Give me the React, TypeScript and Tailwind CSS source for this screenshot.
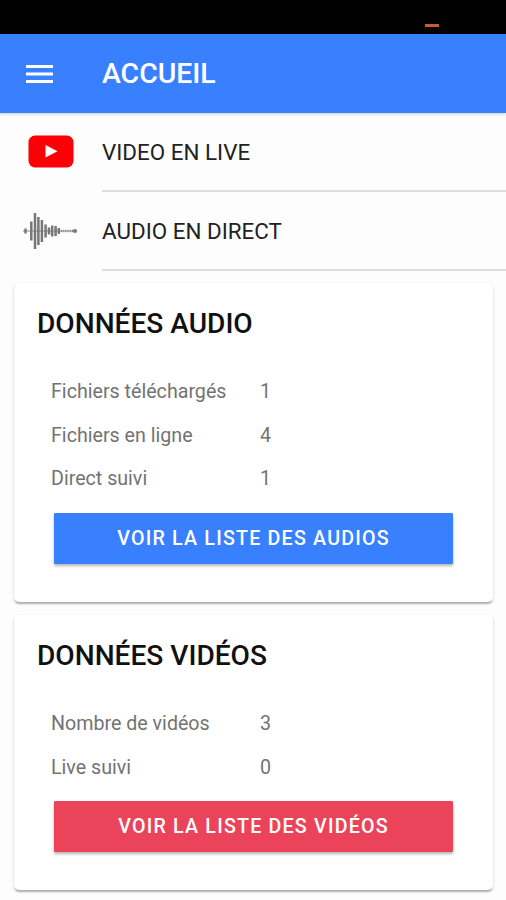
interface Stat {
  label: string;
  value: number;
}

interface StatCardProps {
  title: string;
  stats: Stat[];
  action: string;
  color: 'primary' | 'danger';
  className?: string;
}

const BUTTON_COLORS = {
  primary: 'bg-[#3880ff]',
  danger: 'bg-[#eb445a]',
};

const AUDIO_STATS: Stat[] = [
  { label: 'Fichiers téléchargés', value: 1 },
  { label: 'Fichiers en ligne', value: 4 },
  { label: 'Direct suivi', value: 1 },
];

const VIDEO_STATS: Stat[] = [
  { label: 'Nombre de vidéos', value: 3 },
  { label: 'Live suivi', value: 0 },
];

// [x, half height] of each bar of the wave form
const WAVE_BARS = [
  [2.5, 2.5],
  [8.3, 9.5],
  [12, 18],
  [15.4, 14],
  [18.9, 11],
  [22.6, 6.5],
  [26, 3.5],
  [29.2, 5.5],
  [32.6, 5],
  [35.8, 3],
];

function MenuIcon() {
  return (
    <svg width="27" height="20" viewBox="0 0 27 20" fill="#fff">
      <rect y="1" width="27" height="3" />
      <rect y="8.5" width="27" height="3" />
      <rect y="16" width="27" height="3" />
    </svg>
  );
}

function YoutubeIcon() {
  return (
    <svg width="46" height="34" viewBox="0 0 46 34">
      <rect x="0.5" y="0.5" width="45" height="32" rx="6.5" fill="#fb0007" />
      <path d="M17.5 10v12.5l12-6.2z" fill="#fff" />
    </svg>
  );
}

function WaveIcon() {
  return (
    <svg width="54" height="38" viewBox="0 0 54 38" stroke="#777">
      <path d="M0 19h53" strokeWidth="1.2" stroke="#8a8a8a" />
      {WAVE_BARS.map(([x, h]) => (
        <path key={x} d={`M${x} ${19 - h}v${h * 2}`} strokeWidth="2.5" />
      ))}
      <path d="M38 19h13" strokeWidth="2.4" strokeDasharray="1 1.2" stroke="#8a8a8a" />
      <circle cx="52" cy="19" r="2" fill="#777" stroke="none" />
    </svg>
  );
}

function StatCard({ title, stats, action, color, className = '' }: StatCardProps) {
  return (
    <section
      className={`mr-[13px] ml-3.5 rounded-[5px] bg-white shadow-[0_3px_2px_-1px_rgba(0,0,0,0.24),0_1px_3px_rgba(0,0,0,0.18)] ${className}`}
    >
      <h2 className="pt-6 pl-[23px] text-[28.1px] leading-[34px] font-medium text-[#111]">{title}</h2>
      <dl className="mt-[29px] pl-[37px] text-[19.65px] leading-[44px] text-[#737373]">
        {stats.map(({ label, value }) => (
          <div key={label} className="flex h-[43.7px]">
            <dt className="w-[209px]">{label}</dt>
            <dd>{value}</dd>
          </div>
        ))}
      </dl>
      <button
        className={`mt-3 ml-10 block h-[51px] w-[399px] rounded-[1px] text-[19.65px] font-medium tracking-[1.2px] text-white shadow-[0_2px_3px_rgba(0,0,0,0.3)] ${BUTTON_COLORS[color]}`}
      >
        {action}
      </button>
    </section>
  );
}

export default function App() {
  return (
    <div className="h-[900px] w-full overflow-hidden bg-[#fdfdfd] font-[Roboto,sans-serif]">
      <div className="flex h-[34px] justify-end bg-black pt-6 pr-[67px]">
        <div className="h-[3px] w-3.5 bg-[#c95a35]" />
      </div>
      <header className="flex h-[79px] items-center bg-[#3880ff] pl-[26px] shadow-[0_1px_3px_rgba(0,0,0,0.2)]">
        <MenuIcon />
        <h1 className="ml-[49px] pt-0.5 text-[28.4px] font-medium text-white">ACCUEIL</h1>
      </header>
      <ul className="text-[22.4px] text-[#222]">
        <li className="flex h-[79px]">
          <span className="flex w-[102px] items-center pb-0.5 pl-7">
            <YoutubeIcon />
          </span>
          <span className="flex flex-1 items-center border-b-2 border-[#dedede] pt-0.5">VIDEO EN LIVE</span>
        </li>
        <li className="flex h-[79px]">
          <span className="flex w-[102px] items-center pb-0.5 pl-[23px]">
            <WaveIcon />
          </span>
          <span className="flex flex-1 items-center border-b-2 border-[#dedede] pt-0.5">AUDIO EN DIRECT</span>
        </li>
      </ul>
      <StatCard
        className="mt-3 h-[319px]"
        title="DONNÉES AUDIO"
        stats={AUDIO_STATS}
        action="VOIR LA LISTE DES AUDIOS"
        color="primary"
      />
      <StatCard
        className="mt-[13px] h-[275px]"
        title="DONNÉES VIDÉOS"
        stats={VIDEO_STATS}
        action="VOIR LA LISTE DES VIDÉOS"
        color="danger"
      />
    </div>
  );
}
